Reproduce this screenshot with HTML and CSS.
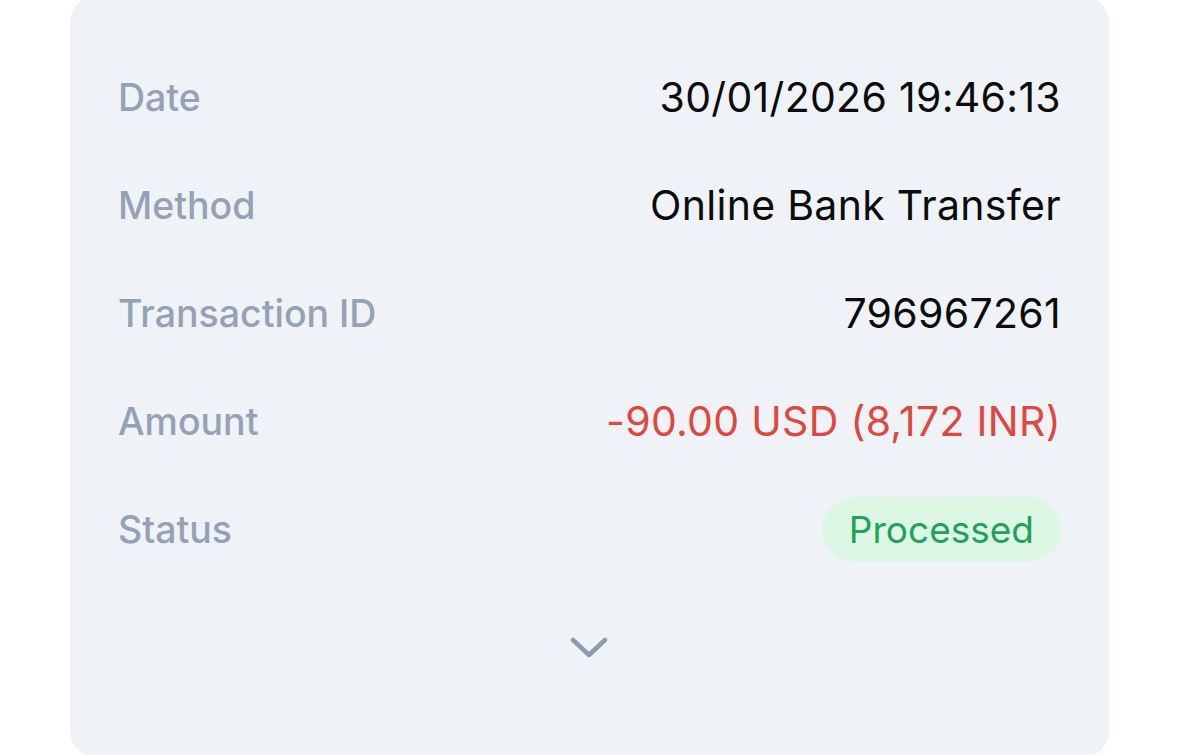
FILE: index.html
```html
<!DOCTYPE html>
<html>

<head>
    <title>Transaction details</title>
    <link rel="stylesheet" href="styles.css">
</head>

<body>
    <div class="detail-card">
        <div class="detail-row">
            <span class="detail-label">Date</span>
            <span class="detail-value">30/01/2026 19:46:13</span>
        </div>
        <div class="detail-row">
            <span class="detail-label">Method</span>
            <span class="detail-value">Online Bank Transfer</span>
        </div>
        <div class="detail-row">
            <span class="detail-label">Transaction ID</span>
            <span class="detail-value">796967261</span>
        </div>
        <div class="detail-row">
            <span class="detail-label">Amount</span>
            <span class="detail-value detail-negative">-90.00 USD (8,172 INR)</span>
        </div>
        <div class="detail-row">
            <span class="detail-label">Status</span>
            <span class="status-pill">Processed</span>
        </div>
        <div class="detail-toggle">
            <svg width="40" height="24" viewBox="0 0 40 24">
                <path d="M3 3 L19 18 L35 3" fill="none" stroke="#8e9ab0" stroke-width="4.5" stroke-linecap="round" stroke-linejoin="round" />
            </svg>
        </div>
    </div>
</body>

</html>
```

FILE: styles.css
```css
body {
    font-family: Inter, "Open Sans", sans-serif;
    background-color: #fff;
    margin: 0;
    height: 755px;
    overflow: hidden;
}

.detail-card {
    margin: -4px 70px 0;
    height: 761px;
    box-sizing: border-box;
    padding: 47px 48px 0 48px;
    background-color: #eff3f8;
    border-radius: 26px;
}

.detail-row {
    display: flex;
    justify-content: space-between;
    align-items: center;
    height: 108px;
}

.detail-label {
    font-size: 37.5px;
    font-weight: 500;
    color: #95a1b5;
}

.detail-value {
    font-size: 41px;
    color: #0c0c0c;
    letter-spacing: 0.3px;
}

.detail-negative {
    color: #e0473e;
}

.status-pill {
    font-size: 37px;
    color: #22a15a;
    background: #dcf8e4;
    border-radius: 33px;
    padding: 0 27px;
    height: 65px;
    line-height: 65px;
}

.detail-toggle {
    display: flex;
    justify-content: center;
    margin-top: 54px;
}
```
